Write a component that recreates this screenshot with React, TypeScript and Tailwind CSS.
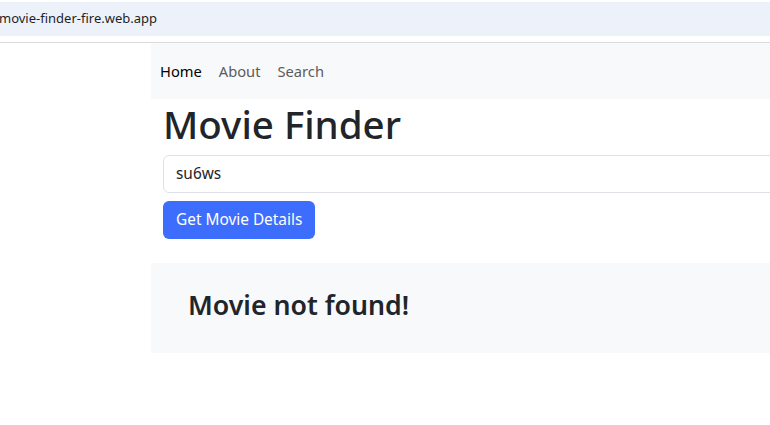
import React from "react";

export default function App() {
  const font = { fontFamily: '"Noto Sans", "Open Sans", Arial, sans-serif' };
  return (
    <div className="w-[770px] h-[425px] overflow-hidden bg-white text-[#212529]" style={font}>
      <div className="pt-[2px] h-[43px] border-b border-[#dadce0]">
        <div className="h-[34px] bg-[#edf2fa] flex items-center pl-0">
          <span className="text-[13px] text-[#1f1f1f] -ml-[1px]">movie-finder-fire.web.app</span>
        </div>
      </div>
      <div className="flex">
        <div className="w-[151px] shrink-0" />
        <div className="w-[900px] shrink-0">
          <nav className="h-[56px] bg-[#f8f9fa] flex items-center pl-[9px] gap-[17px] text-[14.7px]">
            <span className="text-black">Home</span>
            <span className="text-[#5c5c5c]">About</span>
            <span className="text-[#5c5c5c]">Search</span>
          </nav>
          <div className="pl-[12px]">
            <h1 className="text-[38.5px] font-medium leading-[46px] mt-[2px]">Movie Finder</h1>
            <div className="mt-[8px] h-[38px] w-[800px] border border-[#dee2e6] rounded-[6px] flex items-center px-[12px] text-[15.4px]">
              su6ws
            </div>
            <button className="mt-[8px] h-[38px] px-[13px] bg-[#3d6dfd] text-white rounded-[6px] text-[15.4px]">
              Get Movie Details
            </button>
          </div>
          <div className="mt-[24px] h-[90px] bg-[#f8f9fa] flex items-center pl-[37px] pb-[5px]">
            <h2 className="text-[26.7px] font-semibold">Movie not found!</h2>
          </div>
        </div>
      </div>
    </div>
  );
}
